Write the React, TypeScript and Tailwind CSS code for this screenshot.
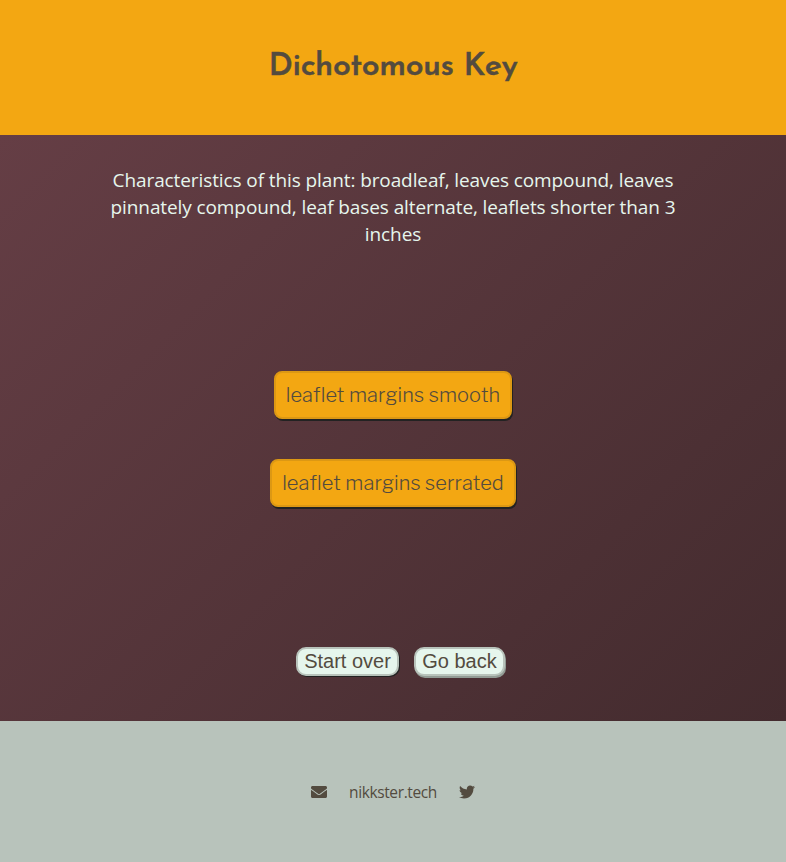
import { FaEnvelope, FaTwitter } from "react-icons/fa";

const choice =
  "h-[48px] rounded-[8px] border-2 border-[#dc9814] bg-[#f3a712] text-center text-[#534b3f] shadow-[1px_2px_0px_#222] font-['Libre_Franklin','Open_Sans',sans-serif] text-[20px] font-light tracking-[0.1px] whitespace-nowrap";
const nav =
  "h-[29px] rounded-[10px] border-2 bg-[#e6f6ed] pb-px text-center text-[#534b3f] font-['Liberation_Sans',Arial,sans-serif] text-[20px] leading-[24px] whitespace-nowrap";

export default function App() {
  return (
    <div className="flex h-[862px] w-full flex-col font-['Open_Sans',sans-serif]">
      <header className="flex h-[135px] items-center justify-center bg-[#f3a712]">
        <h1 className="font-['Josefin_Sans','Lato',sans-serif] text-[32px] leading-[32px] font-semibold tracking-[-0.4px] whitespace-nowrap text-[#534b3f] [-webkit-text-stroke:0.4px_#534b3f]">
          <span className="block pb-px">Dichotomous Key</span>
        </h1>
      </header>
      <main className="flex h-[586px] flex-col items-center bg-linear-[135deg,#653e45,#432b2e]">
        <p className="mt-[32px] text-center text-[19px] leading-[27px] tracking-[-0.1px] whitespace-nowrap text-[#e6f6ed]">
          <span className="block">Characteristics of this plant: broadleaf, leaves compound, leaves</span>
          <span className="block">pinnately compound, leaf bases alternate, leaflets shorter than 3</span>
          <span className="block">inches</span>
        </p>
        <div className="mt-[123px] flex flex-col items-center gap-[40px]">
          <button className={`${choice} w-[238px]`}>leaflet margins smooth</button>
          <button className={`${choice} w-[246px]`}>leaflet margins serrated</button>
        </div>
        <div className="mt-[140px] ml-[15px] flex gap-[15px]">
          <button className={`${nav} w-[103px] border-[#b8c3bb] shadow-[1px_1px_0px_#222]`}>Start over</button>
          <button className={`${nav} w-[91px] border-[#b8c3bb] shadow-[1px_2px_0px_#929c95]`}>Go back</button>
        </div>
      </main>
      <footer className="flex h-[141px] items-center justify-center gap-[22px] bg-[#b8c3bb] text-[16px] text-[#534b3f]">
        <FaEnvelope />
        <span className="pt-[2px] text-[15.5px] tracking-[-0.38px]">nikkster.tech</span>
        <FaTwitter />
      </footer>
    </div>
  );
}
